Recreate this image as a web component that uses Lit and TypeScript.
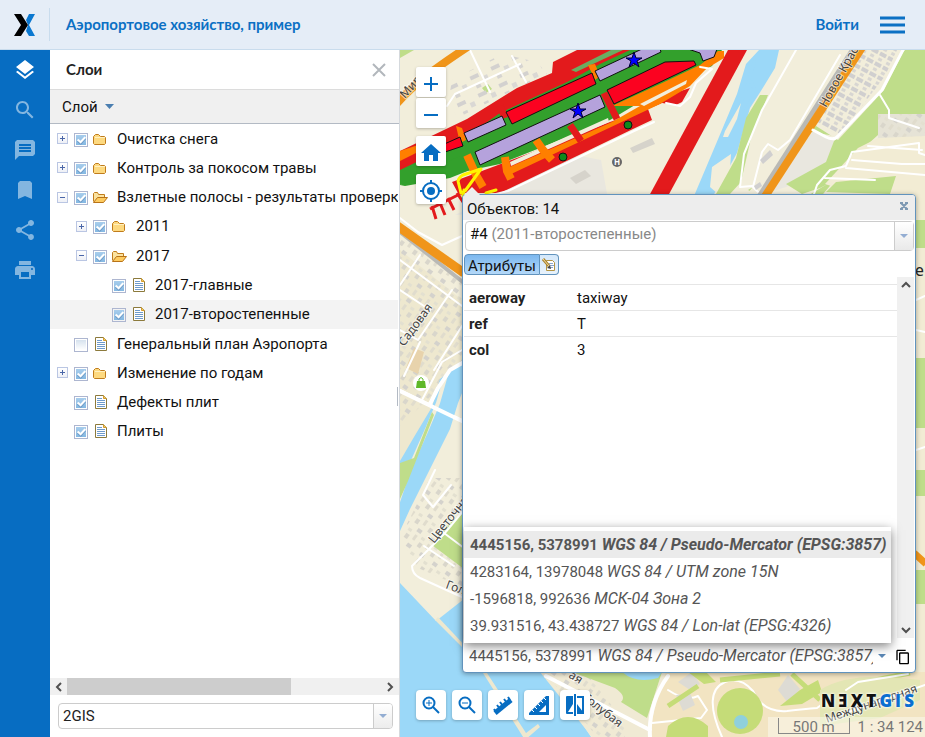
import { LitElement, html, css, svg, nothing } from "lit";
import { customElement, property, state } from "lit/decorators.js";

interface LayerRow {
  label: string;
  level: number;
  kind: "open" | "closed" | "leaf";
  checked: boolean;
  current?: boolean;
}

const LAYERS: LayerRow[] = [
  { label: "Очистка снега", level: 0, kind: "closed", checked: true },
  { label: "Контроль за покосом травы", level: 0, kind: "closed", checked: true },
  { label: "Взлетные полосы - результаты проверки", level: 0, kind: "open", checked: true },
  { label: "2011", level: 1, kind: "closed", checked: true },
  { label: "2017", level: 1, kind: "open", checked: true },
  { label: "2017-главные", level: 2, kind: "leaf", checked: true },
  { label: "2017-второстепенные", level: 2, kind: "leaf", checked: true, current: true },
  { label: "Генеральный план Аэропорта", level: 0, kind: "leaf", checked: false },
  { label: "Изменение по годам", level: 0, kind: "closed", checked: true },
  { label: "Дефекты плит", level: 0, kind: "leaf", checked: true },
  { label: "Плиты", level: 0, kind: "leaf", checked: true },
];

const COORDS = [
  ["4445156, 5378991", "WGS 84 / Pseudo-Mercator (EPSG:3857)"],
  ["4283164, 13978048", "WGS 84 / UTM zone 15N"],
  ["-1596818, 992636", "МСК-04 Зона 2"],
  ["39.931516, 43.438727", "WGS 84 / Lon-lat (EPSG:4326)"],
];

const RAIL = [
  ["Слои", "M11.99 18.54l-7.37-5.73L3 14.07l9 7 9-7-1.63-1.27-7.38 5.74zM12 16l7.36-5.73L21 9l-9-7-9 7 1.63 1.27L12 16z"],
  ["Поиск", "M15.5 14h-.79l-.28-.27C15.41 12.59 16 11.11 16 9.5 16 5.91 13.09 3 9.5 3S3 5.91 3 9.5 5.91 16 9.5 16c1.61 0 3.09-.59 4.23-1.57l.27.28v.79l5 4.99L20.49 19l-4.99-5zm-6 0C7.01 14 5 11.99 5 9.5S7.01 5 9.5 5 14 7.01 14 9.5 11.99 14 9.5 14z"],
  ["Описание", "M20 2H4L2 4V22l4-4h14l2-2V4zM6 6h12v2H6V6zm12 8H6v-2h12v2zm0-3H6V9h12v2z"],
  ["Закладки", "M17 3H7L5 5V21l7-3 7 3V5z"],
  ["Поделиться", "M18 16.08c-.76 0-1.44.3-1.96.77L8.91 12.7c.05-.23.09-.46.09-.7s-.04-.47-.09-.7l7.05-4.11c.54.5 1.25.81 2.04.81 1.66 0 3-1.34 3-3s-1.34-3-3-3-3 1.34-3 3c0 .24.04.47.09.7L8.04 9.81C7.5 9.31 6.79 9 6 9c-1.66 0-3 1.34-3 3s1.34 3 3 3c.79 0 1.5-.31 2.04-.81l7.12 4.16c-.05.21-.08.43-.08.65 0 1.61 1.31 2.92 2.92 2.92s2.92-1.31 2.92-2.92-1.31-2.92-2.92-2.92z"],
  ["Печать", "M19 8H5c-1.66 0-3 1.34-3 3v6h4v4h12v-4h4v-6c0-1.66-1.34-3-3-3zm-3 11H8v-5h8v5zm3-7c-.55 0-1-.45-1-1s.45-1 1-1 1 .45 1 1-.45 1-1 1zm-1-9H6v4h12V3z"],
];

@customElement("map-canvas")
export class MapCanvas extends LitElement {
  static styles = css`
    :host { display: block; background: #f2eedb; overflow: hidden; }
    .map { display: block; width: 100%; height: 100%; }
    .street { font: 12px "Noto Sans", sans-serif; fill: #444; stroke: #fff; stroke-width: 2px; stroke-opacity: 0.6; paint-order: stroke; }
    .place { font: 16px "Noto Sans", sans-serif; fill: #222; }
    .poi { font: bold 8px "Noto Sans", sans-serif; fill: #fff; text-anchor: middle; }
    .road { fill: none; stroke: #fff; stroke-linejoin: round; stroke-linecap: round; }
    .park { fill: #bfdd8a; }
    .water { fill: #9bd8f8; }
    .highway { fill: none; stroke: #f0951a; }
    .rail { fill: none; stroke: #b9b9b5; }
    .orange { fill: #ff7f00; }
    .crimson { fill: #e31a1c; }
    .line-red { fill: none; stroke: #e31a1c; }
    .line-orange { fill: none; stroke: #ff7f00; }
    .grass { fill: #33a02c; }
    .lilac { fill: #b5a2dc; stroke: #111; }
    .scarlet { fill: #fb0220; stroke: #111; }
    .yellow { fill: none; stroke: #fff500; stroke-width: 3px; stroke-linejoin: round; stroke-linecap: round; }
    .star { fill: #00f; stroke: #003; }
    .dot { fill: #0f8a1c; stroke: #111; }
  `;

  render() {
    const star = "0,-8 2,-2 8,-2 3,1 5,7 0,3 -5,7 -3,1 -8,-2 -2,-2";
    return html`<svg class="map" viewBox="400 50 525 687" preserveAspectRatio="xMinYMin slice" role="img" aria-label="Карта">
      ${svg`
      <defs>
        <pattern id="homes" width="18" height="16" patternUnits="userSpaceOnUse" patternTransform="rotate(-54)">
          <rect x="1" y="2" width="5" height="4" fill="#d9d6cb"/><rect x="9" y="1" width="3" height="4" fill="#e3e0d0"/>
          <rect x="4" y="10" width="6" height="3" fill="#e0dccd"/><rect x="13" y="9" width="4" height="5" fill="#d4d2cc"/>
        </pattern>
        <pattern id="blocks" width="11" height="9" patternUnits="userSpaceOnUse" patternTransform="rotate(-62)">
          <rect x="1" y="1" width="4" height="7" fill="#d0cfcf"/><rect x="7" y="2" width="3" height="4" fill="#d8d6d2"/>
        </pattern>
        <pattern id="sheds" width="23" height="19" patternUnits="userSpaceOnUse" patternTransform="rotate(-25)">
          <rect x="2" y="2" width="9" height="4" fill="#d3d1cf"/><rect x="14" y="7" width="5" height="5" fill="#dad8d4"/><rect x="4" y="12" width="5" height="4" fill="#d6d4d0"/>
        </pattern>
      </defs>
      <path d="M400 50H925V737H400Z" fill="#f2eedb"/>
      <path class="park" d="M400 50h14l-14 8zM482 88l6-4 4 5-6 4z"/>
      <path d="M452 80l50-26 35 8 10 12-90 44-8-20z" fill="url(#sheds)"/>
      <path d="M455 215l120-60 26 5 8 45z" fill="#e9e7df"/>
      <path d="M570 178l15-8 6 6-15 8zM630 148l22-10 3 6-22 9z" fill="#d6d3cb"/>
      <path class="road" stroke-width="2" d="M447 106l8-12 65-30M470 50l20 42M512 56l14 26M400 218l18 14 24 13 20-9"/>
      <path class="highway" stroke-width="8" d="M390 112C410 85 440 65 475 42"/>

      <path class="water" d="M759 50h20l-4 18-16 26-9 14-13 45-10 18-14 25h-19l22-52 21-50 9-30z"/>
      <path d="M755 60l-9 30-16 40M750 80l4 8-3 12-5 10M730 160l-20 30" fill="none" stroke="#9bd8f8" stroke-width="3"/>
      <path d="M741 103l-16 28-2 6h5l9-18zM731 154l-19 13-2 20 8 7 12-24z" fill="#f2eedb"/>
      <path class="park" d="M760 95l8 0-17 43-10 44-11 12h-14l20-36 10-40z"/>
      <path class="park" d="M905 50h20v66h-45l-6 18-56 66h-50l-20-10 37-22 15-30 80-60z"/>
      <path d="M798 130l50 8-4 36-20 12-20 12h-60z" fill="#f2eedb"/>
      <path d="M814 130l20 11-8 26-40 20-22 7h4z" fill="#e9e7df"/>
      <path class="park" d="M834 141l10-8 20-22 14-6 0 30-20 18-8 20-30 15-18 6-16-10 40-22z"/>
      <path class="road" stroke-width="2" d="M796 50l-34 60-18 44-4 33 12-1 8 8M840 55l-50 85-12 10-10-6-6 8-9 35"/>
      <path d="M760 160l10-10 3 5-10 9zM754 186l6-4 2 4-6 4z" fill="#d0cfcf"/>
      <path d="M862 50h42l-20 40-46 50-22-14z" fill="#f2eedb"/>
      <path d="M862 50h35l-12 26-46 60-22-14z" fill="url(#blocks)"/>
      <path class="rail" stroke-width="5" d="M855 46l-97 152"/>
      <path class="highway" stroke-width="8" d="M863 46L764 198"/>
      <path class="road" stroke-width="3" d="M904 48l-22 42-44 46q-4 5-12 1l-13-7"/>
      <path d="M878 114h47v24h-47z" fill="#e6e3d6"/><path d="M878 114h47v24h-47z" fill="url(#homes)"/>
      <path d="M858 148l20-10 47-2v58h-70l-30-10z" fill="#f2ecd4"/>
      <path class="park" d="M826 192l10-10 60-6-6 18z"/>
      <path class="road" stroke-width="2" d="M814 194l3-9 13-15 16-4 6-14 67-9v10l6 2M852 160l50 4 23 0M846 168l79 7M880 95l9 15 0 8 30 10M868 146l54 4M825 178l50 2"/>

      <path class="crimson" d="M400 151L467 119 517 88 552 73 553 62 577 50H660V60L400 182z"/>
      <path class="grass" d="M400 170L460 141 500 113 567 82 600 64 630 50H722L712 66 650 96 610 120 500 164 400 185z"/>
      <path d="M400 185L460 156 480 166 450 178 405 186z" fill="#33a02c"/>
      <path d="M571 70l40-20h12l-47 22z" fill="#6aae62"/>
      <path class="orange" d="M400 151l18-6 22-4-40 20zM456 126l6 2 4 12-6 3zM588 65l7-1 5 12-5 4z"/>
      <path class="crimson" d="M452 182L490 168 530 153 610 122 650 108 665 96 690 88 682 102 676 105 662 103 648 109 652 120 633 129 500 193 458 193z"/>
      <path class="orange" d="M505 169L612 122 640 106 612 106 660 84 700 65 718 51H724V58L706 69 690 86 660 104 507 176z"/>
      <path d="M510 162l98-44 1 4-98 44zM640 104l47-24-1 4-42 22z" fill="#f2eedb"/>
      <path class="line-orange" stroke-width="8" d="M467 155l9 20 7 12M505 157l2 14 4 8M536 140l7 10 9 10"/>
      <path class="line-red" stroke-width="7" d="M570 125l11 16M604 93l13 26M500 106l5 12"/>
      <path class="lilac" d="M475 152l125-57 5 12-125 58zM464 133l38-17 4 9-38 17zM595 71l47-22h18l1 3-61 29z"/>
      <path class="scarlet" d="M506 112l86-39 4 11-84 40zM607 90l58-28 29-1 2 4-82 39zM440 146l20-9 3 9-21 7z"/>
      <path class="lilac" d="M688 49h29l-3 8-11 4-3-8z"/>
      <path class="crimson" d="M728 50h19l-79 146h-19z"/>
      <path class="road" stroke-width="2" d="M484 197l24-6 126-60 20-9M700 67l12 2-16 14-6 14-10 9-14-3"/>
      <path class="line-red" stroke-width="3" d="M430 209l32-16M432 206l4 13M440 203l5 12M448 198l6 12M457 193l8 12"/>
      <path class="yellow" d="M458 181q1-4 5-6l18-6-16 22-4 2zM464 190l-1 6M486 193l10-3"/>
      <polygon class="star" points=${star} transform="translate(578 111)"/>
      <polygon class="star" points=${star} transform="translate(634 60)"/>
      <circle class="dot" cx="563" cy="157" r="4"/><circle class="dot" cx="628" cy="125" r="4"/>
      <circle cx="617" cy="162" r="5" fill="#666"/><text class="poi" x="617" y="165">H</text>

      <path d="M400 250l62 50v80l-62 120z" fill="#eee8cf"/>
      <path d="M400 235l62 46v85l-62 60z" fill="url(#homes)"/>
      <path d="M414 348l10 4-6 22-12-6z" fill="#e8d3ac"/>
      <path class="road" stroke-width="2" d="M400 260l62 46M400 330l18 10 34-50M404 376l16-34M434 370l28-44M400 290l30 20M400 390l62 30M420 255l-20 30M462 350l-20 12-20 38"/>
      <path class="rail" stroke-width="4" d="M400 232l64 51"/>
      <path class="highway" stroke-width="9" d="M396 225l68 48"/>
      <path class="water" d="M464 360v28l-6 15-8 26-20 40-20 40-10 22v-70l14-24 18-30 8-28z"/>
      <path d="M446 375l-8 28-10 24-20 45-10 30" fill="none" stroke="#f2eedb" stroke-width="4"/>
      <path class="park" d="M432 412l2 3-26 66-8 18v-36l14-5z"/>
      <path class="road" stroke-width="4" d="M464 362l-14 8-12 18-8 16M398 390l66 32"/>
      <path d="M430 478h34v110l-46-20-18-30z" fill="url(#homes)"/>
      <path class="park" d="M432 545l14-18 18-16v58l-20-15z"/>
      <path class="road" stroke-width="2" d="M435 470l-12 25 10 12 18-22M464 510l-20 24-32 32q0 8 8 12l44 20M424 546l30 20M440 530l24 18"/>
      <path class="water" d="M400 583l36 38 28-22v46l34 28h47l22 28 24 36H400z"/>
      <path d="M438 617l30 32-1 3-32-32zM487 673l39 60 12-9 2 3-15 13-42-67z" fill="#eee8cf"/>
      <circle cx="421" cy="383" r="8" fill="#fff"/><path d="M417 381h8l1 7h-10z" fill="#5fb829"/><path d="M419 381v-2q2-3 4 0v2" fill="none" stroke="#5fb829"/>

      <path d="M540 672h110l16 0-5 65H592z" fill="#f0ead4"/>
      <path d="M545 672h40l40 50v15h-28z" fill="url(#homes)"/>
      <path class="park" d="M572 672h90l-15 46-26-16q6-6-6-14z"/>
      <path class="water" d="M622 672h40l-4 6q-22 6-36-6z"/>
      <path d="M666 672h259v65H648q6-30 18-65z" fill="#f2e4c2"/>
      <path class="road" stroke-width="4" d="M546 676l104 54M668 676q-20 28-18 61"/>
      <path class="road" stroke-width="2" d="M668 690q18 12 30 6l9 14-6 8-49 5M722 737q-20-45 3-55 15-6 28 9 10 22 34 20 18-2 30-3 28-20 46-28l30-4"/>
      <path d="M678 682l14-10 8 12-10 6zM676 695l14-2 5 12-12 6zM778 690l10-15 12 14-12 14z" fill="#dddbd4"/>
      <path d="M688 672h18l10 10-12 2zM780 706l20-16 18-10 4 12-20 12zM668 726q20-18 40 0v11h-42z" fill="#c5dc78"/>
      <path d="M792 674l28 26M860 720l50-34M850 685l60-12M668 706l30-20M720 680l60-6" stroke="#c5dc78" stroke-width="5" fill="none"/>
      <circle cx="740" cy="711" r="23" fill="#c5dc78"/><circle cx="741" cy="722" r="7" fill="#8fd0dc"/>
      <path d="M820 690q30-20 100-10v20l-40 18-60 8z" fill="#e3e6b4"/>
      <path class="road" stroke-width="2" d="M846 690l12-8 50-8M840 715l85-30"/>
      <path d="M915 194h10v478h-10z" fill="#f2ecd4"/>
      <path class="park" d="M915 220h10v28h-10zM915 358h10v70h-10zM915 470h10v26h-10zM915 570h10v34h-10z"/>
      <path d="M914 553l12 11" stroke="#f0951a" stroke-width="7"/>
      <path class="road" stroke-width="2" d="M916 300l9-4M916 330l9 2M916 450l9-3"/>

      <text class="street" transform="translate(405 99) rotate(-48)">Мира</text>
      <text class="street" transform="translate(826 108) rotate(-61)">Новое Красное</text>
      <text class="street" transform="translate(404 347) rotate(-54)">Садовая</text>
      <text class="street" transform="translate(434 544) rotate(-51)">Цветочная</text>
      <text class="street" transform="translate(445 588) rotate(20)">Голубая</text>
      <text class="street" transform="translate(568 677) rotate(32)">ая</text>
      <text class="street" transform="translate(582 699) rotate(38)">Голубая</text>
      <text class="street" transform="translate(827 723) rotate(-19)">Международная</text>
      <text class="place" x="915" y="276">е</text>
      `}
    </svg>`;
  }
}

@customElement("layer-tree")
export class LayerTree extends LitElement {
  static styles = css`
    :host { display: block; overflow: hidden; }
    .tree { display: grid; grid-auto-rows: 1fr; height: 322px; margin: 0; padding: 0; list-style: none; }
    .row { display: grid; grid-template-columns: 17px 19px 24px 1fr; align-items: center; padding-left: 7px; white-space: nowrap; }
    .level1 { padding-left: 26px; }
    .level2 { padding-left: 45px; }
    .current { background: #f3f3f3; }
    .toggle { position: relative; width: 11px; height: 11px; padding: 0; border: 1px solid #bac6e3; background: linear-gradient(#fff, #eef0f6); }
    .toggle::before { content: ""; position: absolute; left: 2px; top: 4px; width: 5px; height: 1px; background: #4a66a8; }
    .plus::after { content: ""; position: absolute; left: 4px; top: 2px; width: 1px; height: 5px; background: #4a66a8; }
    .check { position: relative; appearance: none; box-sizing: border-box; width: 14px; height: 14px; margin: 2px 0 0; border: 1px solid #adb6d0; padding: 1px; background: linear-gradient(#d6e2ee, #fff) content-box; }
    .check:checked { background: linear-gradient(#a8cdec, #84b8e2) content-box; }
    .check:checked::after { content: ""; position: absolute; left: 4px; top: 1px; width: 3px; height: 6px; border: solid #fff; border-width: 0 2px 2px 0; transform: rotate(42deg); filter: drop-shadow(1px 1px 0 #6f9cc8); }
    .icon { display: block; width: 16px; height: 16px; }
  `;

  private icon(kind: LayerRow["kind"]) {
    if (kind === "closed") {
      return html`<svg class="icon" viewBox="0 0 16 16"><path d="M.5 5.500l2-2h3l2 2h4l1 1v6l-1 1h-10l-1-1z" fill="#fdd980" stroke="#c07c1c"/><path d="M2 6.500h10" stroke="#fff0c0"/></svg>`;
    }
    if (kind === "open") {
      return html`<svg class="icon" viewBox="0 0 16 16"><path d="M.5 12.500v-8l1-1h3l1 2h6v3" fill="#fbe3a0" stroke="#c07c1c"/><path d="M.5 13.500l4-5h10l-4 5z" fill="#fdcb60" stroke="#b87318"/></svg>`;
    }
    return html`<svg class="icon" viewBox="0 0 16 16"><path d="M2.500 1.500h8l3 3v10h-11z" fill="#fff" stroke="#8c7a3c"/><path d="M10.500 1.500v3h3" fill="#f2cc66" stroke="#d39a2e"/><path d="M4 4.500h5M4 6.500h8M4 8.500h8M4 10.500h8M4 12.500h8" stroke="#6f9bcb"/></svg>`;
  }

  render() {
    return html`<ul class="tree">
      ${LAYERS.map((r, i) => html`<li class="row level${r.level} ${r.current ? "current" : ""}">
        ${r.kind === "leaf"
          ? html`<span></span>`
          : html`<button class="toggle ${r.kind === "closed" ? "plus" : ""}" aria-expanded=${r.kind === "open"} aria-labelledby="n${i}"></button>`}
        <input class="check" type="checkbox" id="c${i}" .checked=${r.checked} />
        ${this.icon(r.kind)}
        <label id="n${i}" for="c${i}">${r.label}</label>
      </li>`)}
    </ul>`;
  }
}

@customElement("feature-popup")
export class FeaturePopup extends LitElement {
  @state() private open = true;

  static styles = css`
    :host { display: flex; flex-direction: column; box-sizing: border-box; border: 1px solid #6193bd; border-radius: 4px; background: #fff; box-shadow: 0 1px 5px rgba(0, 0, 0, 0.35); }
    button { font: inherit; color: inherit; margin: 0; padding: 0; border: 0; background: none; text-align: left; }
    i { font-size: 16px; }
    .head { position: relative; display: flex; justify-content: space-between; height: 25px; line-height: 28px; padding: 0 5px 0 4px; background: #ededed; border-radius: 3px 3px 0 0; }
    .tip { position: absolute; left: 1px; top: -8px; width: 16px; height: 8px; background: #ededed; clip-path: polygon(50% 0, 100% 100%, 0 100%); }
    .close { width: 12px; height: 20px; }
    .icon { display: block; }
    .combo { display: flex; height: 28px; margin: 1px 1px 0 2px; border: 1px solid #ccc; border-radius: 4px; line-height: 24px; }
    .value { flex: 1; padding: 0 4px 4px; }
    .muted { color: #888; }
    .arrow { width: 19px; display: grid; place-items: center; border-left: 1px solid #ccc; background: linear-gradient(#fff, #e9e9e9); }
    .tabs { display: flex; margin: 3px 1px 2px; }
    .tab { height: 21px; box-sizing: border-box; border: 1px solid #6193bd; line-height: 22px; background: linear-gradient(#7cb8ef, #b4d8f8); padding: 0 3px; border-radius: 4px 0 0 4px; }
    .edit { width: 19px; height: 21px; box-sizing: border-box; border: 1px solid #6193bd; border-left: 0; border-radius: 0 4px 4px 0; background: linear-gradient(#d4e8fa, #e8f2fb); padding: 1px; }
    .body { flex: 1; display: flex; margin: 0 1px; min-height: 0; }
    .content { flex: 1; padding-top: 7px; }
    .attrs { width: 100%; border-collapse: collapse; }
    .attrs th, .attrs td { height: 25px; padding: 0 0 0 5px; border-top: 1px solid #e6e6e6; text-align: left; font-weight: normal; }
    .attrs th { width: 103px; font-weight: bold; color: #222; }
    .scroll { width: 17px; display: flex; flex-direction: column; justify-content: space-between; align-items: center; background: #f0f0f0; padding: 4px 0; box-sizing: border-box; }
    .foot { position: relative; display: flex; align-items: center; height: 32px; padding: 2px 4px 0 6px; gap: 5px; color: #555; }
    .current { flex: 1; min-width: 0; overflow: hidden; white-space: nowrap; }
    .copy { padding: 2px 0 0 4px; }
    .menu { position: absolute; left: 1px; right: 24px; bottom: 29px; margin: 0; padding: 4px 0; background: #fff; box-shadow: 0 3px 10px rgba(0, 0, 0, 0.5); }
    .option { display: block; width: 100%; height: 27px; padding: 0 0 0 6px; white-space: nowrap; overflow: hidden; }
    .chosen { background: #ebebeb; font-weight: bold; }
  `;

  render() {
    return html`
      <div class="head"><span class="tip"></span><span>Объектов: 14</span>
        <button class="close" aria-label="Закрыть"><svg class="icon" width="12" height="20" viewBox="0 0 12 20"><path d="M2 8h3M7 8h3M2 14h3M7 14h3M3 8l6 6M9 8l-6 6" fill="none" stroke="#7e99b3" stroke-width="2"/></svg></button>
      </div>
      <div class="combo"><button class="value" role="combobox" aria-expanded="false">#4 <span class="muted">(2011-второстепенные)</span></button>
        <button class="arrow" aria-label="Выбрать объект"><svg class="icon" width="8" height="4" viewBox="0 0 8 4"><path d="M0 0h8L4 4z" fill="#93add2"/></svg></button></div>
      <div class="tabs"><button class="tab">Атрибуты</button>
        <button class="edit" aria-label="Редактировать"><svg class="icon" width="16" height="16" viewBox="0 0 16 16"><path d="M5.500 3.500h6l2 2v8h-8z" fill="#fff" stroke="#b29444"/><path d="M8 6.500h4M9 8.500h4M8 10.500h4" stroke="#8aa6cc"/><path d="M2 2l6 7" stroke="#a9832f" stroke-width="3"/><path d="M2 2l6 7" stroke="#f7dfa0"/><path d="M6 11l4 1-1-4z" fill="#444"/></svg></button></div>
      <div class="body">
        <div class="content"><table class="attrs">
          <tr><th scope="row">aeroway</th><td>taxiway</td></tr>
          <tr><th scope="row">ref</th><td>T</td></tr>
          <tr><th scope="row">col</th><td>3</td></tr>
        </table></div>
        <div class="scroll">
          <svg class="icon" width="10" height="7" viewBox="0 0 10 7"><path d="M1 6l4-4 4 4" fill="none" stroke="#505050" stroke-width="2"/></svg>
          <svg class="icon" width="10" height="7" viewBox="0 0 10 7"><path d="M1 1l4 4 4-4" fill="none" stroke="#505050" stroke-width="2"/></svg>
        </div>
      </div>
      <div class="foot">
        <button class="current" aria-haspopup="listbox" aria-expanded=${this.open} @click=${() => (this.open = !this.open)}>${COORDS[0][0]} <i>${COORDS[0][1]}</i></button>
        <svg class="icon" width="8" height="4" viewBox="0 0 8 4"><path d="M0 0h8L4 4z" fill="#5b87b5"/></svg>
        <button class="copy" aria-label="Копировать"><svg class="icon" width="16" height="16" viewBox="0 0 24 24"><path d="M16 1H4c-1.1 0-2 .9-2 2v14h2V3h12V1zm3 4H8c-1.1 0-2 .9-2 2v14c0 1.1.9 2 2 2h11c1.1 0 2-.9 2-2V7c0-1.1-.9-2-2-2zm0 16H8V7h11v14z" fill="#000"/></svg></button>
        ${this.open ? html`<div class="menu" role="listbox">${COORDS.map(([c, n], i) => html`<button class="option ${i === 0 ? "chosen" : ""}" role="option" aria-selected=${i === 0}>${c} <i>${n}</i></button>`)}</div>` : nothing}
      </div>`;
  }
}

@customElement("app-root")
export class AppRoot extends LitElement {
  @property() title = "Аэропортовое хозяйство, пример";

  static styles = css`
    :host { display: flex; flex-direction: column; height: 100vh; font: 15px/20px Roboto, sans-serif; color: #111; overflow: hidden; }
    button { font: inherit; color: inherit; margin: 0; padding: 0; border: 0; background: none; }
    .icon { display: block; }
    .top { display: flex; align-items: center; height: 49px; border-bottom: 1px solid #c9dced; background: #e5edf7; font: bold 15px/20px Lato, sans-serif; color: #0b70c4; padding-right: 20px; }
    .logo { width: 50px; height: 33px; box-sizing: border-box; border-right: 1px solid #c9dced; padding: 6px 0 0 14px; }
    .heading { flex: 1; margin: 0; padding: 0 0 2px 16px; font: inherit; }
    .login { color: inherit; text-decoration: none; padding: 0 21px 2px 0; }
    .main { flex: 1; display: flex; min-height: 0; }
    .rail { width: 50px; background: #076dc2; display: flex; flex-direction: column; align-items: center; }
    .tool { height: 40px; opacity: 0.5; }
    .active { opacity: 1; }
    .panel { position: relative; display: flex; flex-direction: column; width: 350px; box-sizing: border-box; border-right: 1px solid #d5d9dd; background: #fff; }
    .panel-head { display: flex; align-items: center; justify-content: space-between; height: 39px; border-bottom: 1px solid #dcdcdc; padding: 0 13px 0 16px; }
    .panel-title { margin: 0; padding-bottom: 2px; font: bold 15px/20px Lato, sans-serif; color: #222; }
    .bar { height: 33px; border-bottom: 1px solid #b3bac4; background: #f0f0f0; padding-left: 12px; }
    .layer-menu { display: flex; align-items: center; gap: 7px; height: 33px; }
    .tree { flex: 1; min-height: 0; margin-right: 1px; }
    .hscroll { display: flex; align-items: center; height: 17px; background: #f0f0f0; }
    .cap { width: 17px; display: grid; place-items: center; }
    .track { flex: 1; height: 17px; }
    .thumb { width: 71%; height: 17px; background: #cdcdcd; }
    .base { position: relative; height: 26px; margin: 8px 6px 8px 8px; }
    .select { appearance: none; width: 100%; height: 26px; padding: 0 4px; border: 1px solid #ccc; border-radius: 4px; background: #fff; font: inherit; color: #222; }
    .base-arrow { position: absolute; right: 1px; top: 1px; width: 18px; height: 24px; display: grid; place-items: center; border-left: 1px solid #ccc; border-radius: 0 3px 3px 0; background: linear-gradient(#fff, #ececec); pointer-events: none; }
    .grip { position: absolute; right: 1px; top: 337px; width: 1px; height: 19px; background: #b3bac4; }
    .stage { position: relative; flex: 1; min-width: 0; }
    .map { position: absolute; inset: 0; }
    .controls { position: absolute; left: 16px; top: 17px; display: grid; gap: 8px; }
    .zoom { display: grid; gap: 1px; }
    .tools { position: absolute; left: 16px; bottom: 17px; display: flex; gap: 6px; }
    .btn { box-sizing: border-box; width: 30px; height: 30px; display: grid; place-items: center; background: #fff; border-radius: 2px; box-shadow: 0 1px 3px rgba(0, 0, 0, 0.25); }
    .controls .btn { padding-top: 4px; }
    .tools .btn { border-radius: 4px; }
    .popup { position: absolute; left: 62px; right: 9px; top: 144px; bottom: 64px; }
    .brand { position: absolute; right: 11px; bottom: 26px; width: 93px; display: flex; justify-content: space-between; font: 800 17px/20px "Open Sans", "Noto Sans", sans-serif; color: #111; text-shadow: 0 0 3px #fff, 0 0 3px #fff; text-decoration: none; }
    .blue { color: #0b6fd0; }
    .scale { position: absolute; right: 0; bottom: 0; display: flex; align-items: flex-start; gap: 8px; height: 20px; padding: 0 2px 0 10px; background: rgba(255, 255, 255, 0.4); color: #777; }
    .ruler { width: 70px; height: 15px; margin-top: 1px; border: 1px solid #888; border-top: 0; text-align: center; line-height: 18px; }
  `;

  render() {
    return html`
      <header class="top">
        <div class="logo"><svg class="icon" width="22" height="22" viewBox="0 0 22 22"><path d="M15 0h6L15 11l6 11h-6l-3-5 2-6-2-5z" fill="#0b78d0"/><path d="M0 0h7l7 11-7 11H0l7-11z" fill="#000"/></svg></div>
        <h1 class="heading">${this.title}</h1>
        <a class="login" href="#login">Войти</a>
        <button aria-label="Меню"><svg class="icon" width="25" height="18" viewBox="0 0 25 18"><path d="M0 2h25M0 9h25M0 16h25" stroke="#0b70c4" stroke-width="3"/></svg></button>
      </header>
      <div class="main">
        <nav class="rail">${RAIL.map(([name, d], i) => html`<button class="tool ${i === 0 ? "active" : ""}" aria-label=${name}><svg class="icon" width="24" height="24" viewBox="0 0 24 24"><path d=${d} fill="#fff"/></svg></button>`)}</nav>
        <aside class="panel">
          <div class="panel-head"><h2 class="panel-title">Слои</h2>
            <button aria-label="Закрыть панель"><svg class="icon" width="14" height="14" viewBox="0 0 14 14"><path d="M1 1l12 12M13 1L1 13" stroke="#b2b7bc" stroke-width="2"/></svg></button></div>
          <div class="bar"><button class="layer-menu">Слой <svg class="icon" width="9" height="5" viewBox="0 0 9 5"><path d="M0 0h9L4.500 5z" fill="#4a7eb0"/></svg></button></div>
          <layer-tree class="tree"></layer-tree>
          <div class="hscroll">
            <span class="cap"><svg class="icon" width="7" height="10" viewBox="0 0 7 10"><path d="M6 1L2 5l4 4" fill="none" stroke="#505050" stroke-width="2"/></svg></span>
            <div class="track"><div class="thumb"></div></div>
            <span class="cap"><svg class="icon" width="7" height="10" viewBox="0 0 7 10"><path d="M1 1l4 4-4 4" fill="none" stroke="#505050" stroke-width="2"/></svg></span>
          </div>
          <div class="base"><select class="select" aria-label="Подложка"><option>2GIS</option></select>
            <span class="base-arrow"><svg class="icon" width="8" height="4" viewBox="0 0 8 4"><path d="M0 0h8L4 4z" fill="#93add2"/></svg></span></div>
          <span class="grip"></span>
        </aside>
        <main class="stage">
          <map-canvas class="map"></map-canvas>
          <div class="controls">
            <div class="zoom">
              <button class="btn" aria-label="Приблизить"><svg class="icon" width="14" height="14" viewBox="0 0 14 14"><path d="M0 7h14M7 0v14" stroke="#076dc2" stroke-width="2"/></svg></button>
              <button class="btn" aria-label="Отдалить"><svg class="icon" width="14" height="14" viewBox="0 0 14 14"><path d="M0 7h14" stroke="#076dc2" stroke-width="2"/></svg></button>
            </div>
            <button class="btn" aria-label="Домой"><svg class="icon" width="24" height="24" viewBox="0 0 24 24"><path d="M10 20v-6h4v6h5v-8h3L12 3 2 12h3v8z" fill="#076dc2"/></svg></button>
            <button class="btn" aria-label="Моё местоположение"><svg class="icon" width="22" height="22" viewBox="0 0 22 22"><circle cx="11" cy="11" r="4" fill="#076dc2"/><circle cx="11" cy="11" r="8" fill="none" stroke="#076dc2" stroke-width="2"/><path d="M11 0v3M11 19v3M0 11h3M19 11h3" stroke="#076dc2" stroke-width="2"/></svg></button>
          </div>
          <feature-popup class="popup"></feature-popup>
          <div class="tools">
            <button class="btn" aria-label="Увеличить область"><svg class="icon" width="18" height="18" viewBox="0 0 18 18"><circle cx="7" cy="7" r="5.500" fill="none" stroke="#076dc2" stroke-width="2"/><path d="M11 11l6 6" stroke="#076dc2" stroke-width="2"/><path d="M4 7h6M7 4v6" stroke="#076dc2"/></svg></button>
            <button class="btn" aria-label="Уменьшить область"><svg class="icon" width="18" height="18" viewBox="0 0 18 18"><circle cx="7" cy="7" r="5.500" fill="none" stroke="#076dc2" stroke-width="2"/><path d="M11 11l6 6" stroke="#076dc2" stroke-width="2"/><path d="M4 7h6" stroke="#076dc2"/></svg></button>
            <button class="btn" aria-label="Измерить расстояние"><svg class="icon" width="20" height="20" viewBox="0 0 20 20"><path d="M2 18L18 5" stroke="#076dc2" stroke-width="5"/><path d="M3 17l-2-3M7 14l-3-4M10 11L7 7M14 8l-3-4M17 5l-2-3" stroke="#076dc2" stroke-width="2"/></svg></button>
            <button class="btn" aria-label="Измерить площадь"><svg class="icon" width="20" height="20" viewBox="0 0 20 20"><path d="M0 20v-2L17 1h3v19z" fill="#076dc2"/><path d="M10 17h7v-7z" fill="#fff"/><path d="M3 15l2 2M6 12l2 2M9 9l2 2M12 6l2 2M15 3l2 2" stroke="#fff"/></svg></button>
            <button class="btn" aria-label="Сравнить"><svg class="icon" width="20" height="22" viewBox="0 0 20 22"><path d="M1 3q0-1 1-1h6v18H2q-1 0-1-1zM9 0h2v22H9z" fill="#076dc2"/><path d="M8 10v8H3z" fill="#fff"/><path d="M12 3h6v16h-6" fill="none" stroke="#076dc2" stroke-width="2"/><path d="M12 10l6 8v1h-6z" fill="#076dc2"/></svg></button>
          </div>
          <a class="brand" href="https://nextgis.com" aria-label="NextGIS"><span>N</span><span>Ǝ</span><span>X</span><span>T</span><span class="blue">G</span><span class="blue">I</span><span class="blue">S</span></a>
          <div class="scale"><div class="ruler">500 m</div><span>1 : 34 124</span></div>
        </main>
      </div>`;
  }
}
